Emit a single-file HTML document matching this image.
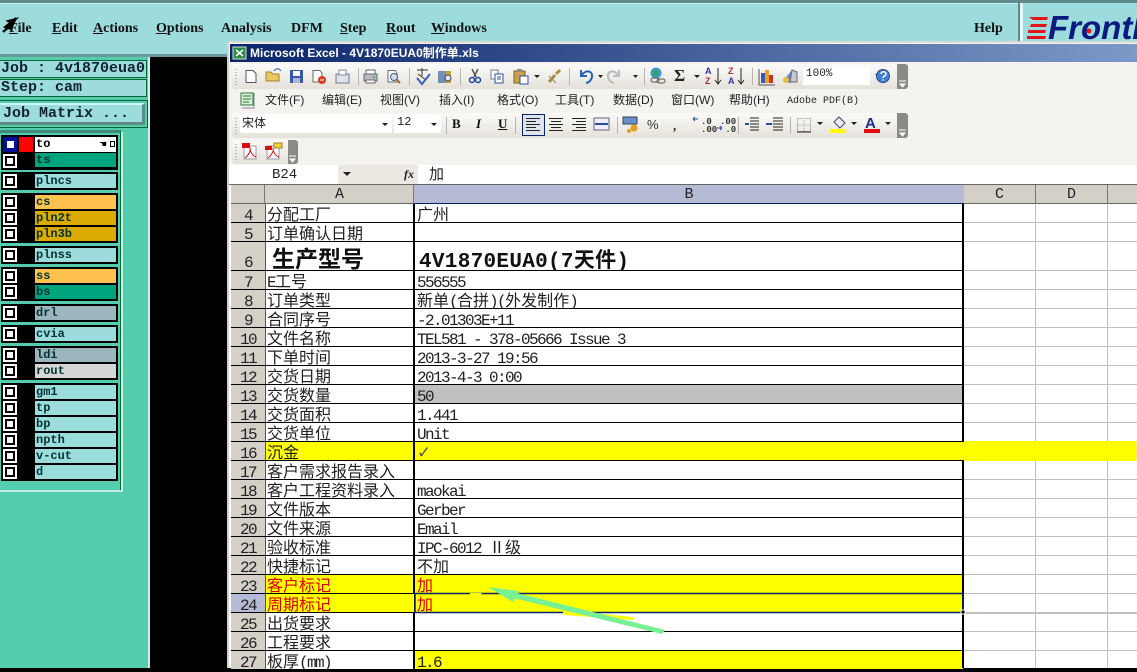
<!DOCTYPE html>
<html><head><meta charset="utf-8"><style>
html,body{margin:0;padding:0;width:1137px;height:668px;overflow:hidden;background:#000}
div,span{box-sizing:border-box}
.a{position:absolute}
.t{position:absolute;white-space:nowrap}
.m{position:absolute;top:20px;font:bold 14px/17px "Liberation Serif",serif;color:#111;white-space:nowrap}
.m u{text-decoration:underline}
.j{position:absolute;left:-1px;width:148px;height:18px;background:#9cdcdc;border:1px solid #063;font:bold 15px/16px "Liberation Mono",monospace;color:#123;white-space:pre;padding-left:1px}
.g{position:absolute;left:1px;width:117px;background:#000}
.l{position:absolute;left:35px;width:81px;height:14px;background:#9cdcdc;font:bold 12px/14px "Liberation Mono",monospace;color:#033;padding-left:1px}
.k{position:absolute;left:3px;width:14px;height:14px;background:#000;border:2px solid #fff}
.k:after{content:"";position:absolute;left:2px;top:2px;width:6px;height:6px;background:#fff}
.n{position:absolute;font:12px/16px "Liberation Sans","Noto Sans CJK SC",sans-serif;color:#222;top:92px;white-space:nowrap}
.r{position:absolute;left:231px;width:906px;height:19px;border-bottom:1px solid #000;font:16px/18px "Liberation Mono","Noto Sans CJK SC",monospace;letter-spacing:-1.6px;color:#222}
.h{position:absolute;left:0;top:0;width:35px;height:18px;background:#d4d0c8;border-right:1px solid #555;text-align:center}
.c1{position:absolute;left:35px;top:0;width:147px;height:18px;background:#fff;padding-left:1px;white-space:nowrap}
.c2{position:absolute;left:183px;top:0;width:549px;height:18px;background:#fff;padding-left:2px;white-space:nowrap;border-left:1px solid #000}
.h:before,.c1:before,.c2:before{content:"";display:inline-block;width:0;height:16px;vertical-align:baseline}
.x:before{height:25px!important}
.c{font:16px/18px "Noto Sans CJK SC",sans-serif;letter-spacing:0;color:#222}
.y{background:#ff0!important}
.red,.red .c{color:#d80000}
</style></head><body>

<!-- CAM left side -->
<div class="a" style="left:0;top:0;width:1137px;height:57px;background:#9cdcdc"></div>
<div class="a" style="left:0;top:0;width:1137px;height:3px;background:#5f8a8a"></div>
<div class="a" style="left:0;top:3px;width:1018px;height:1px;background:#c8f0f0"></div>
<div class="a" style="left:1018px;top:3px;width:2px;height:40px;background:#5f8a8a"></div>
<div class="a" style="left:1020px;top:3px;width:3px;height:40px;background:#e4f6f6"></div>
<div class="a" style="left:0;top:56px;width:149px;height:612px;background:#53cdae"></div>
<div class="a" style="left:0;top:54px;width:228px;height:3px;background:#6a9a9a"></div>
<div class="a" style="left:148px;top:57px;width:2px;height:611px;background:#d0f0e8"></div>
<div class="a" style="left:150px;top:57px;width:78px;height:611px;background:#000"></div>
<div class="m" style="left:9px"><u>F</u>ile</div>
<div class="m" style="left:52px"><u>E</u>dit</div>
<div class="m" style="left:93px"><u>A</u>ctions</div>
<div class="m" style="left:156px"><u>O</u>ptions</div>
<div class="m" style="left:221px">Analysis</div>
<div class="m" style="left:291px">DFM</div>
<div class="m" style="left:340px"><u>S</u>tep</div>
<div class="m" style="left:386px"><u>R</u>out</div>
<div class="m" style="left:431px"><u>W</u>indows</div>
<div class="m" style="left:974px">Help</div>

<div class="j" style="top:60px">Job : 4v1870eua0</div>
<div class="j" style="top:79px">Step: cam</div>
<div class="a" style="left:-1px;top:100px;width:149px;height:28px;border:1px solid #063"></div>
<div class="a" style="left:0;top:103px;width:145px;height:22px;background:#9cdcdc;border-top:2px solid #d0f6f6;border-right:3px solid #5f8a8a;border-bottom:3px solid #5f8a8a;font:bold 15px/18px 'Liberation Mono',monospace;color:#123;padding-left:3px;white-space:pre">Job Matrix ...</div>
<div class="a" style="left:0;top:130px;width:121px;height:361px;border-right:1px solid #063;border-bottom:1px solid #063;border-top:3px solid #3d8a75"></div>
<div class="a" style="left:121px;top:132px;width:2px;height:360px;background:#c0f0e4"></div>
<div class="a" style="left:0;top:490px;width:123px;height:2px;background:#c0f0e4"></div>

<!-- layers -->
<div class="g" style="top:135px;height:35px"></div>
<div class="a" style="left:3px;top:137px;width:14px;height:15px;background:#00109a"></div>
<div class="a" style="left:19px;top:137px;width:14px;height:15px;background:#ff0000"></div>
<div class="a" style="left:7px;top:141px;width:7px;height:7px;background:#fff"></div>
<div class="l" style="top:137px;background:#fff;height:15px;color:#000">to</div>
<div class="t" style="left:99px;top:140px;font:9px/10px 'DejaVu Sans',sans-serif;color:#000">&#9754;</div>
<div class="a" style="left:110px;top:141px;width:5px;height:6px;border:1px solid #000"></div>
<div class="k" style="top:154px"></div><div class="l" style="top:153px;background:#00a47c">ts</div>

<div class="g" style="top:172px;height:18px"></div><div class="k" style="top:174px"></div><div class="l" style="top:174px">plncs</div>

<div class="g" style="top:193px;height:50px"></div>
<div class="k" style="top:195px"></div><div class="l" style="top:195px;background:#ffc24f">cs</div>
<div class="k" style="top:211px"></div><div class="l" style="top:211px;background:#dcaa00">pln2t</div>
<div class="k" style="top:227px"></div><div class="l" style="top:227px;background:#dcaa00">pln3b</div>

<div class="g" style="top:246px;height:18px"></div><div class="k" style="top:248px"></div><div class="l" style="top:248px">plnss</div>

<div class="g" style="top:267px;height:34px"></div>
<div class="k" style="top:269px"></div><div class="l" style="top:269px;background:#ffc24f">ss</div>
<div class="k" style="top:285px"></div><div class="l" style="top:285px;background:#00a47c">bs</div>

<div class="g" style="top:304px;height:18px"></div><div class="k" style="top:306px"></div><div class="l" style="top:306px;background:#9cb4bc">drl</div>

<div class="g" style="top:325px;height:18px"></div><div class="k" style="top:327px"></div><div class="l" style="top:327px">cvia</div>

<div class="g" style="top:346px;height:34px"></div>
<div class="k" style="top:348px"></div><div class="l" style="top:348px;background:#9cb4bc">ldi</div>
<div class="k" style="top:364px"></div><div class="l" style="top:364px;background:#d6d6d6">rout</div>

<div class="g" style="top:383px;height:98px"></div>
<div class="k" style="top:385px"></div><div class="l" style="top:385px">gm1</div>
<div class="k" style="top:401px"></div><div class="l" style="top:401px">tp</div>
<div class="k" style="top:417px"></div><div class="l" style="top:417px">bp</div>
<div class="k" style="top:433px"></div><div class="l" style="top:433px">npth</div>
<div class="k" style="top:449px"></div><div class="l" style="top:449px">v-cut</div>
<div class="k" style="top:465px"></div><div class="l" style="top:465px">d</div>

<!-- Logo -->
<div class="t" style="left:1048px;top:9px;font:italic bold 33px/38px 'Liberation Sans',sans-serif;color:#0a1a80;letter-spacing:0">Frontl</div>

<!-- Excel window -->
<div class="a" style="left:227px;top:41px;width:910px;height:627px;background:#f4f3f0"></div>
<div class="a" style="left:227px;top:41px;width:910px;height:2px;background:#dcdcd4"></div>
<div class="a" style="left:227px;top:41px;width:2px;height:627px;background:#d4d0c8"></div>
<div class="a" style="left:230px;top:44px;width:907px;height:18px;background:linear-gradient(90deg,#0a246a,#7b9ac8)"></div>
<div class="t" style="left:250px;top:45px;font:bold 12px/16px 'Liberation Sans','Noto Sans CJK SC',sans-serif;color:#fff">Microsoft Excel - 4V1870EUA0制作单.xls</div>

<!-- toolbars -->
<div class="a" style="left:232px;top:64px;width:676px;height:25px;border-radius:3px;background:linear-gradient(#fbfaf8,#e4e2da)"></div>
<div class="a" style="left:232px;top:113px;width:676px;height:25px;border-radius:3px;background:linear-gradient(#fbfaf8,#e4e2da)"></div>
<div class="a" style="left:232px;top:140px;width:66px;height:24px;border-radius:3px;background:linear-gradient(#fbfaf8,#e4e2da)"></div>
<div class="a" style="left:897px;top:64px;width:11px;height:25px;border-radius:0 3px 3px 0;background:#8a8a86"></div>
<div class="a" style="left:897px;top:113px;width:11px;height:25px;border-radius:0 3px 3px 0;background:#8a8a86"></div>
<div class="a" style="left:288px;top:140px;width:10px;height:24px;border-radius:0 3px 3px 0;background:#8a8a86"></div>

<div class="a" style="left:803px;top:67px;width:67px;height:18px;background:#fff"></div>
<div class="t" style="left:806px;top:67px;font:11px/15px 'Liberation Mono',monospace;color:#222">100%</div>
<div class="a" style="left:240px;top:115px;width:152px;height:18px;background:#fff"></div>
<div class="t" style="left:242px;top:114px;font:12px/17px 'Noto Sans CJK SC',sans-serif;color:#222">宋体</div>
<div class="a" style="left:394px;top:115px;width:47px;height:18px;background:#fff"></div>
<div class="t" style="left:397px;top:115px;font:12px/15px 'Liberation Mono',monospace;color:#222">12</div>
<div class="t" style="left:452px;top:116px;font:bold 13px/16px 'Liberation Serif',serif;color:#111">B</div>
<div class="t" style="left:476px;top:116px;font:italic bold 13px/16px 'Liberation Serif',serif;color:#111">I</div>
<div class="t" style="left:498px;top:116px;font:bold 13px/16px 'Liberation Serif',serif;color:#111"><u>U</u></div>
<div class="a" style="left:522px;top:114px;width:23px;height:22px;background:#dfe3ee;border:1px solid #0a246a"></div>
<div class="t" style="left:673px;top:119px;font:bold 13px/14px 'Liberation Serif',serif;color:#222">,</div>
<div class="t" style="left:647px;top:117px;font:13px/15px 'Liberation Sans',sans-serif;color:#333">%</div>
<div class="t" style="left:674px;top:66px;font:bold 17px/20px 'Liberation Serif',serif;color:#222">&#931;</div>
<div class="t" style="left:865px;top:116px;font:bold 15px/16px 'Liberation Sans',sans-serif;color:#1a2a90">A</div>
<div class="t" style="left:705px;top:66px;font:bold 9px/10px 'Liberation Sans',sans-serif;color:#33a"><span style="display:block">A</span><span style="display:block;color:#a33">Z</span></div>
<div class="t" style="left:728px;top:66px;font:bold 9px/10px 'Liberation Sans',sans-serif;color:#a33"><span style="display:block">Z</span><span style="display:block;color:#33a">A</span></div>
<div class="t" style="left:697px;top:118px;font:bold 9px/8px 'Liberation Mono',monospace;color:#333;padding-left:4px">.0<br>.00</div>
<div class="t" style="left:720px;top:118px;font:bold 9px/8px 'Liberation Mono',monospace;color:#333">.00<br>&nbsp;.0</div>

<!-- menu -->
<div class="n" style="left:265px">文件(F)</div>
<div class="n" style="left:322px">编辑(E)</div>
<div class="n" style="left:380px">视图(V)</div>
<div class="n" style="left:439px">插入(I)</div>
<div class="n" style="left:497px">格式(O)</div>
<div class="n" style="left:555px">工具(T)</div>
<div class="n" style="left:613px">数据(D)</div>
<div class="n" style="left:671px">窗口(W)</div>
<div class="n" style="left:729px">帮助(H)</div>
<div class="n" style="left:787px;top:94px;font-family:'Liberation Mono',monospace;font-size:10px">Adobe PDF(B)</div>

<!-- formula bar -->
<div class="a" style="left:229px;top:165px;width:908px;height:19px;background:#fff"></div>
<div class="a" style="left:338px;top:165px;width:80px;height:19px;background:#ece9e2"></div>
<div class="t" style="left:272px;top:166px;font:14px/18px 'Liberation Mono',monospace;color:#222">B24</div>
<div class="t" style="left:404px;top:166px;font:italic bold 12px/17px 'Liberation Serif',serif;color:#222">fx</div>
<div class="t" style="left:429px;top:165px;font:15px/18px 'Noto Sans CJK SC',sans-serif;color:#222">加</div>

<!-- grid base -->
<div class="a" style="left:229px;top:184px;width:908px;height:484px;background:#fff"></div>
<div class="a" style="left:229px;top:184px;width:908px;height:1px;background:#666"></div>
<div class="a" style="left:231px;top:185px;width:906px;height:19px;background:#d4d0c8;border-bottom:1px solid #666"></div>
<div class="a" style="left:231px;top:185px;width:34px;height:19px;border-right:1px solid #777"></div>
<div class="a" style="left:266px;top:185px;width:148px;height:19px;border-right:1px solid #777;text-align:center;font:15px/19px 'Liberation Mono',monospace;color:#222">A</div>
<div class="a" style="left:414px;top:185px;width:550px;height:19px;background:#b5bbd4;border-bottom:1px solid #0a246a;text-align:center;font:15px/19px 'Liberation Mono',monospace;color:#222">B</div>
<div class="a" style="left:964px;top:185px;width:72px;height:19px;border-right:1px solid #777;text-align:center;font:15px/19px 'Liberation Mono',monospace;color:#222">C</div>
<div class="a" style="left:1036px;top:185px;width:72px;height:19px;border-right:1px solid #777;text-align:center;font:15px/19px 'Liberation Mono',monospace;color:#222">D</div>

<!-- rows -->
<div class="r" style="top:204px"><div class="h">4</div><div class="c1"><span class="c">分配工厂</span></div><div class="c2"><span class="c">广州</span></div></div>
<div class="r" style="top:223px"><div class="h">5</div><div class="c1"><span class="c">订单确认日期</span></div><div class="c2"></div></div>
<div class="r" style="top:242px;height:29px"><div class="h x" style="height:28px">6</div><div class="c1 x" style="height:28px;padding-left:6px;font:bold 23px/28px 'Noto Sans CJK SC',sans-serif;letter-spacing:0;color:#111">生产型号</div><div class="c2 x" style="height:28px;font:bold 21px/28px 'Liberation Mono','Noto Sans CJK SC',monospace;color:#111;letter-spacing:.3px;padding-left:4px">4V1870EUA0(7天件)</div></div>
<div class="r" style="top:271px"><div class="h">7</div><div class="c1">E<span class="c">工号</span></div><div class="c2">556555</div></div>
<div class="r" style="top:290px"><div class="h">8</div><div class="c1"><span class="c">订单类型</span></div><div class="c2"><span class="c">新单</span>(<span class="c">合拼</span>)(<span class="c">外发制作</span>)</div></div>
<div class="r" style="top:309px"><div class="h">9</div><div class="c1"><span class="c">合同序号</span></div><div class="c2">-2.01303E+11</div></div>
<div class="r" style="top:328px"><div class="h">10</div><div class="c1"><span class="c">文件名称</span></div><div class="c2">TEL581 - 378-05666 Issue 3</div></div>
<div class="r" style="top:347px"><div class="h">11</div><div class="c1"><span class="c">下单时间</span></div><div class="c2">2013-3-27 19:56</div></div>
<div class="r" style="top:366px"><div class="h">12</div><div class="c1"><span class="c">交货日期</span></div><div class="c2">2013-4-3 0:00</div></div>
<div class="r" style="top:385px"><div class="h">13</div><div class="c1"><span class="c">交货数量</span></div><div class="c2" style="background:#c0c0c0">50</div></div>
<div class="r" style="top:404px"><div class="h">14</div><div class="c1"><span class="c">交货面积</span></div><div class="c2">1.441</div></div>
<div class="r" style="top:423px"><div class="h">15</div><div class="c1"><span class="c">交货单位</span></div><div class="c2">Unit</div></div>
<div class="r" style="top:442px;background:#ff0"><div class="h">16</div><div class="c1 y"><span class="c">沉金</span></div><div class="c2 y"><span style="font:17px/18px 'DejaVu Sans',sans-serif;color:#555;letter-spacing:0">&#10003;</span></div></div>
<div class="r" style="top:461px"><div class="h">17</div><div class="c1"><span class="c">客户需求报告录入</span></div><div class="c2"></div></div>
<div class="r" style="top:480px"><div class="h">18</div><div class="c1"><span class="c">客户工程资料录入</span></div><div class="c2">maokai</div></div>
<div class="r" style="top:499px"><div class="h">19</div><div class="c1"><span class="c">文件版本</span></div><div class="c2">Gerber</div></div>
<div class="r" style="top:518px"><div class="h">20</div><div class="c1"><span class="c">文件来源</span></div><div class="c2">Email</div></div>
<div class="r" style="top:537px"><div class="h">21</div><div class="c1"><span class="c">验收标准</span></div><div class="c2">IPC-6012 <span class="c">Ⅱ级</span></div></div>
<div class="r" style="top:556px"><div class="h">22</div><div class="c1"><span class="c">快捷标记</span></div><div class="c2"><span class="c">不加</span></div></div>
<div class="r red" style="top:575px"><div class="h" style="color:#222">23</div><div class="c1 y"><span class="c">客户标记</span></div><div class="c2 y"><span class="c">加</span></div></div>
<div class="r red" style="top:594px"><div class="h" style="background:#b5bbd4;color:#222">24</div><div class="c1 y"><span class="c">周期标记</span></div><div class="c2 y"><span class="c">加</span></div></div>
<div class="r" style="top:613px"><div class="h">25</div><div class="c1"><span class="c">出货要求</span></div><div class="c2"></div></div>
<div class="r" style="top:632px"><div class="h">26</div><div class="c1"><span class="c">工程要求</span></div><div class="c2"></div></div>
<div class="r" style="top:651px"><div class="h">27</div><div class="c1"><span class="c">板厚</span>(mm)</div><div class="c2 y">1.6</div></div>

<!-- overlay lines and icons -->
<svg class="a" style="left:0;top:0" width="1137" height="668" viewBox="0 0 1137 668" fill="none">
<!-- thick column lines -->
<path d="M963 204V441M963 461V668" stroke="#000" stroke-width="2"/>
<path d="M414 204V593M414 612V668" stroke="#000" stroke-width="2"/>
<path d="M1035.500 204V441M1107.500 204V441M1035.500 461V668M1107.500 461V668" stroke="#c0c0c0"/>
<path d="M964 222.500H1137M964 241.500H1137M964 270.500H1137M964 289.500H1137M964 308.500H1137M964 327.500H1137M964 346.500H1137M964 365.500H1137M964 384.500H1137M964 403.500H1137M964 422.500H1137M964 479.500H1137M964 498.500H1137M964 517.500H1137M964 536.500H1137M964 555.500H1137M964 574.500H1137M964 593.500H1137M964 612.500H1137M964 631.500H1137M964 650.500H1137" stroke="#c0c0c0"/>
<path d="M964 441.500H1137M964 460.500H1137" stroke="#ff0"/>
<rect x="964" y="613" width="173" height="1" fill="#c0c0c0"/>
<!-- selection -->
<rect x="415" y="593.500" width="548" height="19" stroke="#0a246a" stroke-width="1.500"/>
<rect x="961" y="610" width="4" height="4" fill="#000" stroke="#fff"/>
<!-- logo -->
<path d="M1029 17H1048L1047 20H1033ZM1031 24H1047L1046 27H1030ZM1028 30H1046L1045 33H1028ZM1027 36H1046L1045 39H1027Z" fill="#e4141c"/>
<circle cx="1089" cy="31" r="2.500" fill="#e4141c"/>
<!-- excel icon -->
<rect x="233" y="47" width="13" height="12" fill="#2c8a46" stroke="#cfe8d0"/>
<path d="M236 50L243 56M243 50L236 56" stroke="#fff" stroke-width="1.600"/>
<!-- grips -->
<path d="M236 69V85M236 118V134M236 144V160" stroke="#888" stroke-width="1" stroke-dasharray="1 2"/>
<path d="M899 81H906M900 84H905L902.500 87ZM899 130H906M900 133H905L902.500 136ZM289 156H296M290 159H295L292.500 162Z" fill="#fff" stroke="#fff"/>
<!-- new -->
<path d="M246 70.500H253L256 73.500V82.500H246Z" fill="#fff" stroke="#556"/>
<!-- open -->
<path d="M266 81V72H271L273 74H279V81Z" fill="#e8c860" stroke="#a08030"/>
<path d="M274 71C276 68 279 68 281 71" stroke="#2060b0"/>
<!-- save -->
<rect x="290" y="70" width="13" height="13" fill="#3858a8"/><rect x="293" y="71" width="7" height="5" fill="#fff"/><rect x="293" y="78" width="7" height="5" fill="#b0b8d0"/>
<!-- permission -->
<path d="M313 70.500H320L322 73V82H313Z" fill="#fff" stroke="#667"/><circle cx="322" cy="80" r="4" fill="#d83a20"/><path d="M320 80H324" stroke="#fff"/>
<!-- mail -->
<rect x="336" y="74" width="13" height="9" fill="#dfe4ea" stroke="#778"/><path d="M339 70H346V75H339Z" fill="#fff" stroke="#889"/>
<path d="M358.500 68V85M409.500 68V85M460.500 68V85M569.500 68V85M644.500 68V85M752.500 68V85M617.500 117V134M738.500 117V134M790.500 117V134M446.500 117V134M515.500 117V134" stroke="#b8b6ae"/>
<!-- print -->
<path d="M364 74H377V81H364Z" fill="#b8bcc0" stroke="#667"/><path d="M366 70H375V74H366ZM366 80H375V83H366Z" fill="#fff" stroke="#667"/><circle cx="374" cy="77" r="1" fill="#3a3"/>
<!-- preview -->
<path d="M388 70.500H395L397 73V82H388Z" fill="#fff" stroke="#667"/><circle cx="394" cy="77" r="3.500" fill="#cfe0f4" stroke="#556"/><path d="M397 80L400 83" stroke="#a07020" stroke-width="2"/>
<!-- spell -->
<path d="M417 70H428M422 68V76M418 74L426 80" stroke="#333"/><path d="M417 78L422 84L430 74" stroke="#4060c0" stroke-width="2"/>
<!-- research -->
<rect x="438" y="71" width="8" height="12" fill="#7090b8"/><rect x="446" y="71" width="5" height="12" fill="#c8a040"/><circle cx="448" cy="78" r="3" fill="#dfe8f0" stroke="#445"/>
<!-- cut -->
<path d="M472 69L476 77M478 69L474 77" stroke="#555" stroke-width="1.500"/><circle cx="472" cy="80" r="2.500" stroke="#2040a0" stroke-width="1.500"/><circle cx="478" cy="80" r="2.500" stroke="#2040a0" stroke-width="1.500"/>
<!-- copy -->
<path d="M491 70H498V79H491Z" fill="#fff" stroke="#778"/><path d="M495 74H503V83H495Z" fill="#fff" stroke="#2850a0"/><path d="M497 77H501M497 79H501" stroke="#2850a0"/>
<!-- paste -->
<rect x="514" y="71" width="11" height="12" fill="#c8a050" stroke="#806020"/><rect x="517" y="69" width="5" height="3" fill="#889"/><rect x="520" y="76" width="8" height="8" fill="#fff" stroke="#2850a0"/>
<path d="M534 75H540L537 78Z" fill="#222"/>
<!-- painter -->
<path d="M549 82L555 75M556 74L560 70" stroke="#b09030" stroke-width="3"/><path d="M549 76L556 83" stroke="#888"/>
<!-- undo -->
<path d="M581 70V76H587M582 75C586 69 593 71 592 77C591 81 588 83 586 83" stroke="#2860b8" stroke-width="2"/>
<path d="M598 75H603L600.500 78ZM633 75H638L635.500 78ZM694 75H700L697 78ZM875 74H881L878 77ZM382 123H388L385 126ZM431 123H437L434 126ZM817 122H823L820 125ZM851 122H857L854 125ZM885 122H891L888 125Z" fill="#222"/>
<path d="M619 70V76H613M618 75C614 69 607 71 608 77C609 81 612 83 614 83" stroke="#b8bcc0" stroke-width="2"/>
<!-- link -->
<circle cx="656" cy="73" r="5.500" fill="#3a9ad0"/><path d="M653 71L657 70L658 75L654 76Z" fill="#3aa04a"/><rect x="651" y="78" width="8" height="4" rx="2" stroke="#555"/><rect x="657" y="79" width="8" height="4" rx="2" stroke="#555"/>
<!-- sort arrows -->
<path d="M718 68V83M715 80L718 84L721 80M741 68V83M738 80L741 84L744 80" stroke="#222"/>
<!-- chart -->
<path d="M759 69V85H775" stroke="#555"/><rect x="761" y="73" width="4" height="10" fill="#3858b0"/><rect x="765" y="70" width="4" height="13" fill="#e8a020"/><rect x="769" y="75" width="4" height="8" fill="#d03020"/>
<!-- drawing -->
<path d="M783 81L792 70L797 72L790 83Z" fill="#6a88c8"/><path d="M792 70L797 72L797 82H790Z" fill="#c8c8d0" stroke="#667"/><circle cx="786" cy="80" r="3" fill="#e0c040"/>
<!-- help -->
<circle cx="883" cy="76" r="6.500" fill="#4080d8" stroke="#204890"/><path d="M881 74C881 71 886 71 886 74C886 76 883 76 883 78" stroke="#fff" stroke-width="1.500"/><circle cx="883" cy="80" r=".8" fill="#fff"/>
<!-- menu icon -->
<rect x="241" y="93" width="12" height="12" fill="#d8f0d8" stroke="#2a7a3a"/><path d="M243 96H251M243 99H251M243 102H249" stroke="#2a7a3a"/><path d="M254 93V108H242" stroke="#889"/>
<!-- align -->
<path d="M526 118.500H540M526 121.500H536M526 124.500H540M526 127.500H536M526 130.500H540" stroke="#222"/>
<path d="M549 118.500H563M551 121.500H561M549 124.500H563M551 127.500H561M549 130.500H563" stroke="#222"/>
<path d="M572 118.500H586M576 121.500H586M572 124.500H586M576 127.500H586M572 130.500H586" stroke="#222"/>
<rect x="594" y="118" width="15" height="12" fill="#eef" stroke="#667"/><path d="M595 124H608" stroke="#2850a0" stroke-width="2"/>
<!-- currency -->
<rect x="623" y="117" width="14" height="7" fill="#6a90c8" stroke="#345"/><circle cx="634" cy="128" r="3.500" fill="#e0a020"/><circle cx="629" cy="131" r="2" fill="#e0a020"/>
<!-- dec arrows -->
<path d="M693 119H698M693 119L695 117M693 119L695 121M717 128H722M722 128L720 126M722 128L720 130" stroke="#2850a0"/>
<!-- indent -->
<path d="M750 118H759M750 121H759M750 124H759M750 127H759M750 130H759M773 118H783M773 121H783M773 124H783M773 127H783M773 130H783" stroke="#222"/>
<path d="M745 124H749M766 124H772" stroke="#2850a0" stroke-width="2"/>
<!-- border -->
<rect x="797.500" y="118.500" width="13" height="13" stroke="#888" stroke-dasharray="1 1"/><path d="M797 132H811" stroke="#222"/><path d="M804 118V131M797 125H811" stroke="#aaa" stroke-dasharray="1 1"/>
<!-- fill -->
<path d="M834 122L839 117L845 123L840 128Z" fill="#e8eef4" stroke="#445"/><rect x="830" y="129" width="16" height="4" fill="#ff0"/>
<rect x="864" y="129" width="16" height="4" fill="#e01010"/>
<!-- pdf icons -->
<rect x="244" y="146" width="12" height="13" fill="#fff" stroke="#999"/><rect x="242" y="143" width="8" height="5" fill="#d81010"/><path d="M245 158C249 155 251 150 250 148C250 152 253 156 256 157" stroke="#d81010"/>
<rect x="267" y="146" width="12" height="13" fill="#fff" stroke="#999"/><rect x="265" y="146" width="7" height="4" fill="#d81010"/><rect x="274" y="143" width="8" height="5" fill="#f0d040" stroke="#a08020"/><path d="M268 158C272 155 274 150 273 149C273 152 276 156 279 157" stroke="#d81010"/>
<!-- namebox arrow -->
<path d="M343 172H351L347 176Z" fill="#222"/>
<!-- cursor -->
<path d="M3 32L16 19L8 21L13 24Z M16 18L5 27L11 29Z" fill="#000" stroke="#000" stroke-width="2"/>
<!-- annotation arrow -->
<path d="M563 610L633 617L633 620L563 615Z" fill="#ff0"/>
<path d="M517 593L665 630L662 634L513 598Z" fill="#7af094"/>
<path d="M488 587L519 591L513 602Z" fill="#7af094"/>
<path d="M470 593H482L480 595H470Z" fill="#ff0"/>
</svg>
</body></html>
